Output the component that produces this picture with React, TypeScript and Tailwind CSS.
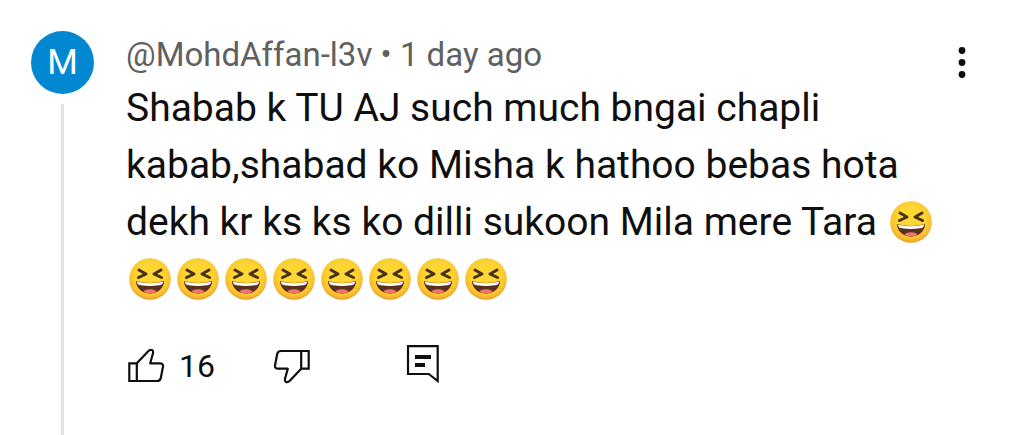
import { clsx } from "clsx"

interface Comment {
  author: string
  age: string
  text: string
  laughs: number
  likes: number
}

const comment: Comment = {
  author: "@MohdAffan-l3v",
  age: "1 day ago",
  text: "Shabab k TU AJ such much bngai chapli kabab,shabad ko Misha k hathoo bebas hota dekh kr ks ks ko dilli sukoon Mila mere Tara",
  laughs: 9,
  likes: 16,
}

function LaughEmoji() {
  return (
    <svg viewBox="0 0 48 48" role="img" aria-label="laughing" className="mb-1.5 inline-block h-12 w-12 align-middle">
      <defs>
        <radialGradient id="face" cx="50%" cy="42%" r="56%">
          <stop offset="0.5" stopColor="#fdd835" />
          <stop offset="0.85" stopColor="#fbc42d" />
          <stop offset="1" stopColor="#eda32c" />
        </radialGradient>
      </defs>
      <circle cx="24" cy="24" r="20.8" fill="url(#face)" />
      <path
        d="M13 15 20 19 12.5 22.5M35 15 28 19 35.5 22.5"
        fill="none"
        stroke="#4d3019"
        strokeWidth="3"
        strokeLinecap="round"
        strokeLinejoin="round"
      />
      <path d="M10 26C18 28.6 30 28.6 38 26 37.8 33.5 31.8 38.5 24 38.5S10.2 33.5 10 26Z" fill="#5a3021" />
      <path d="M17.5 36.4C20 33.4 28 33.4 30.5 36.4 27 38.9 21 38.9 17.5 36.4Z" fill="#ed7770" />
      <path d="M10.8 26.5C18 28.8 30 28.8 37.2 26.5 37 29 35.5 29.9 33 30.3 27 31.2 21 31.2 15 30.3 12.5 29.9 11 29 10.8 26.5Z" fill="#fffdf3" />
    </svg>
  )
}

function ThumbIcon({ down = false }: { down?: boolean }) {
  return (
    <svg
      viewBox="0 0 38 38"
      className={clsx("h-[38px] w-[38px]", down && "rotate-180")}
      fill="none"
      stroke="currentColor"
      strokeWidth="2.2"
      strokeLinejoin="round"
      aria-hidden="true"
    >
      <path d="M2.3 16.3H9.8V34H2.3Z" strokeLinejoin="miter" />
      <path d="M9.8 16.3 21.2 4.2C22.4 3 24 2.4 25.2 3.2 26.3 3.9 26.3 5.2 26 6.3L23.2 16.3H33C35.2 16.3 36.4 17.7 36 19.6L33.8 31C33.4 33 32 34 30 34H9.8" />
    </svg>
  )
}

function ReplyIcon() {
  return (
    <svg viewBox="0 0 36 44" className="h-11 w-9" fill="none" stroke="currentColor" aria-hidden="true">
      <path d="M3 2.2H32.7V37L23.8 30H3Z" strokeWidth="2.2" />
      <path d="M10 13H26M10 21H20" strokeWidth="3.8" />
    </svg>
  )
}

export default function App() {
  return (
    <article className="flex min-h-screen bg-white pl-[31px] pr-12 font-['Roboto',sans-serif] text-[#0f0f0f]">
      {/* Avatar and thread line */}
      <div className="mr-8 flex w-[63px] shrink-0 flex-col items-center gap-2.5 pt-[31px]">
        <div className="flex h-[63px] w-[63px] items-center justify-center rounded-full bg-[#0288d1] text-[35px] leading-none text-white">
          M
        </div>
        <div className="w-[3px] flex-1 bg-[#e3e3e3]" />
      </div>

      <div className="min-w-0 flex-1 pt-[35px]">
        <header className="mb-[5px] flex h-10 items-center text-[33px] leading-10 text-[#606060]">
          <p>
            {comment.author} • {comment.age}
          </p>
        </header>

        <p className="text-[39px] leading-[57px]">
          {comment.text}{" "}
          {Array.from({ length: comment.laughs }, (_, i) => (
            <LaughEmoji key={i} />
          ))}
        </p>

        <div className="mt-[35px] flex items-center pl-px">
          <button type="button" aria-label="Like" className="flex items-center gap-3.5">
            <ThumbIcon />
            <span className="text-[32px] leading-10">{comment.likes}</span>
          </button>
          <button type="button" aria-label="Dislike" className="ml-[58px]">
            <ThumbIcon down />
          </button>
          <button type="button" aria-label="Reply" className="ml-[94px]">
            <ReplyIcon />
          </button>
        </div>
      </div>

      <button type="button" aria-label="More options" className="mt-11 flex h-9 w-7 shrink-0 justify-center">
        <svg viewBox="0 0 8 36" className="h-9 w-2" fill="currentColor" aria-hidden="true">
          <circle cx="4" cy="6.5" r="3.4" />
          <circle cx="4" cy="18.5" r="3.4" />
          <circle cx="4" cy="30.5" r="3.4" />
        </svg>
      </button>
    </article>
  )
}
